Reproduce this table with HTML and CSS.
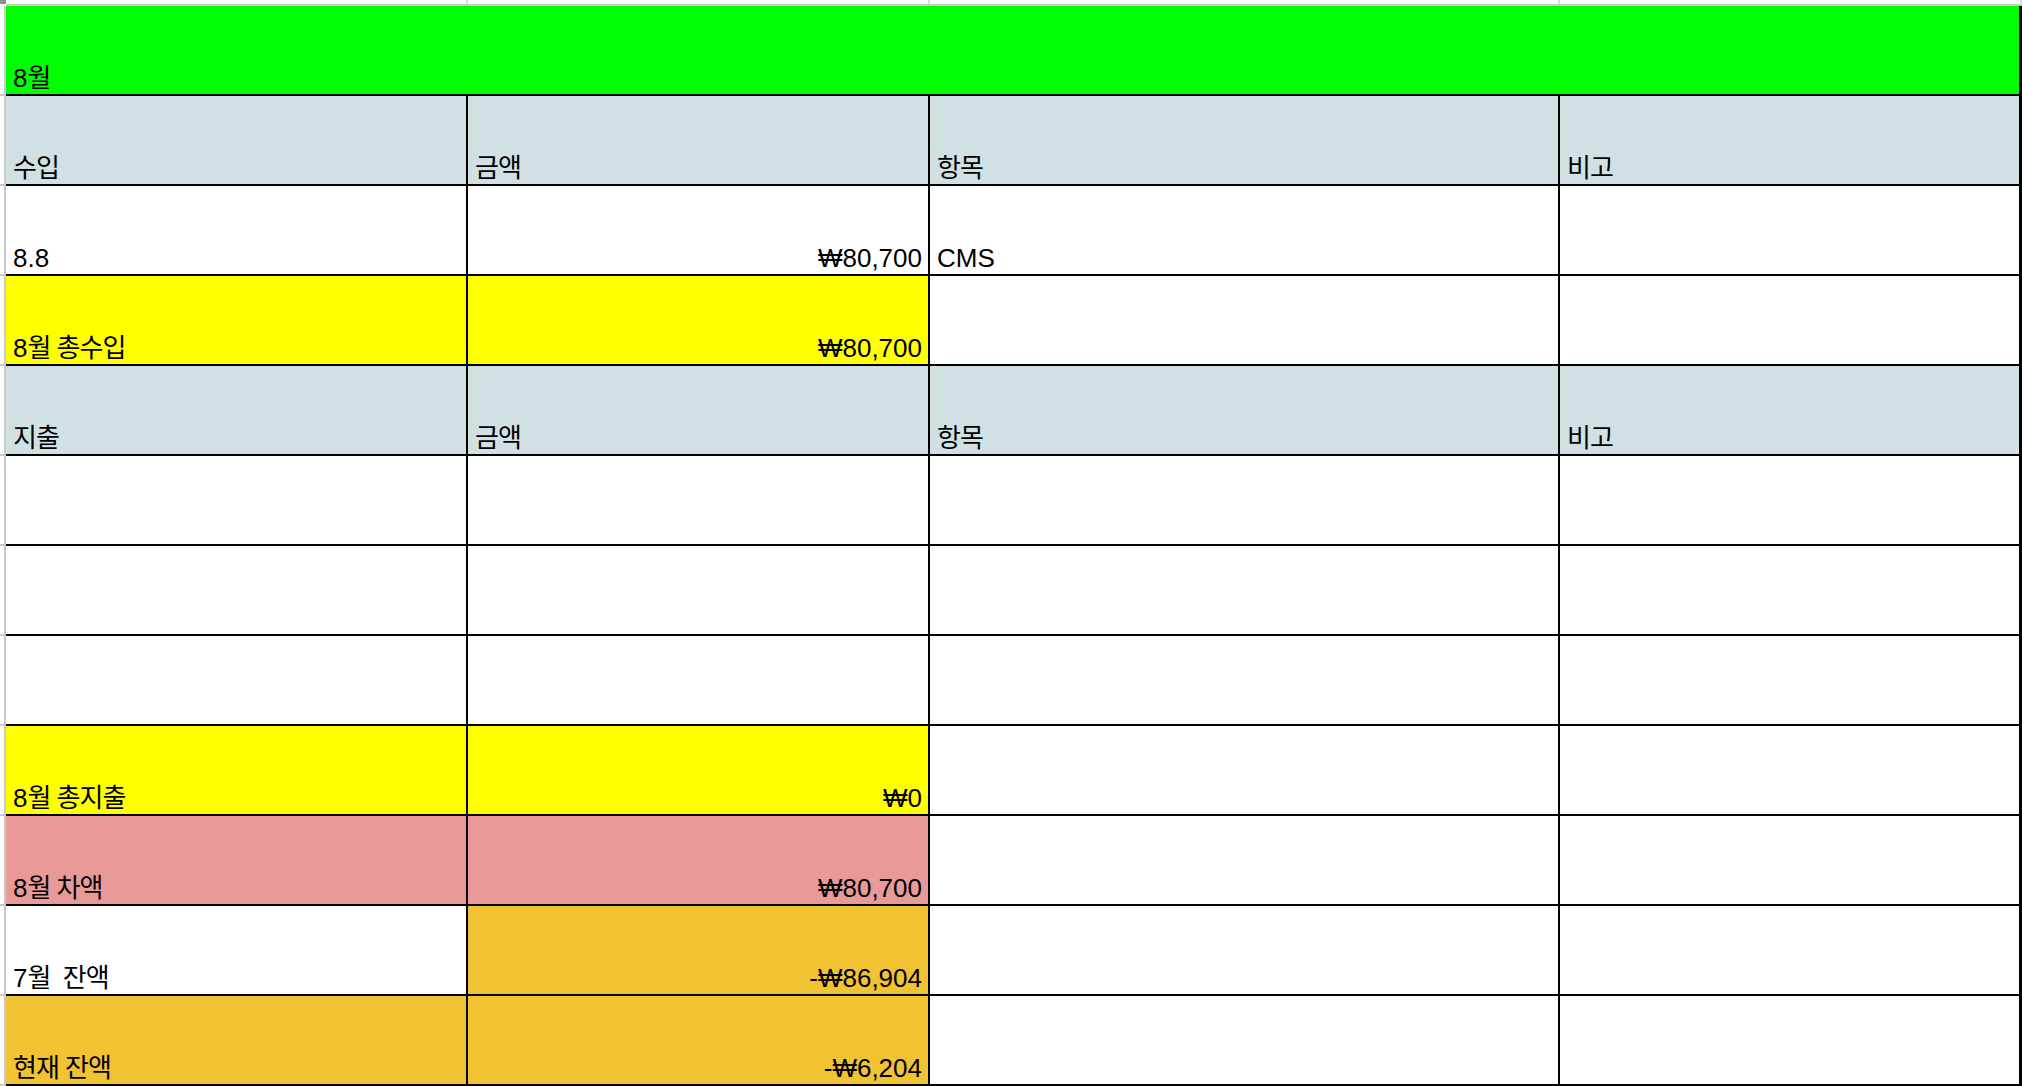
FILE: index.html
```html
<!DOCTYPE html>
<html lang="ko">
<head>
<meta charset="utf-8">
<title>8월 회계</title>
<link rel="stylesheet" href="styles.css">
</head>
<body>
<div class="sheet">
  <div class="corner"></div>
  <div class="colhead">
    <div class="ch"></div><div class="ch"></div><div class="ch"></div><div class="ch"></div>
  </div>
  <div class="rowhead">
    <div class="rh"></div><div class="rh"></div><div class="rh"></div><div class="rh"></div>
    <div class="rh"></div><div class="rh"></div><div class="rh"></div><div class="rh"></div>
    <div class="rh"></div><div class="rh"></div><div class="rh"></div><div class="rh"></div>
  </div>
  <div class="grid">
    <div class="cell title span4">8<span class="ko">월</span></div>

    <div class="cell head"><span class="ko">수입</span></div>
    <div class="cell head"><span class="ko">금액</span></div>
    <div class="cell head"><span class="ko">항목</span></div>
    <div class="cell head last"><span class="ko">비고</span></div>

    <div class="cell">8.8</div>
    <div class="cell num">₩80,700</div>
    <div class="cell">CMS</div>
    <div class="cell last"></div>

    <div class="cell yellow">8<span class="ko">월 총수입</span></div>
    <div class="cell yellow num">₩80,700</div>
    <div class="cell"></div>
    <div class="cell last"></div>

    <div class="cell head"><span class="ko">지출</span></div>
    <div class="cell head"><span class="ko">금액</span></div>
    <div class="cell head"><span class="ko">항목</span></div>
    <div class="cell head last"><span class="ko">비고</span></div>

    <div class="cell"></div><div class="cell"></div><div class="cell"></div><div class="cell last"></div>
    <div class="cell"></div><div class="cell"></div><div class="cell"></div><div class="cell last"></div>
    <div class="cell"></div><div class="cell"></div><div class="cell"></div><div class="cell last"></div>

    <div class="cell yellow">8<span class="ko">월 총지출</span></div>
    <div class="cell yellow num">₩0</div>
    <div class="cell"></div>
    <div class="cell last"></div>

    <div class="cell pink">8<span class="ko">월 차액</span></div>
    <div class="cell pink num">₩80,700</div>
    <div class="cell"></div>
    <div class="cell last"></div>

    <div class="cell">7<span class="ko">월  잔액</span></div>
    <div class="cell orange num">-₩86,904</div>
    <div class="cell"></div>
    <div class="cell last"></div>

    <div class="cell orange"><span class="ko">현재 잔액</span></div>
    <div class="cell orange num">-₩6,204</div>
    <div class="cell"></div>
    <div class="cell last"></div>
  </div>
</div>
</body>
</html>
```

FILE: styles.css
```css
html, body {
  margin: 0;
  padding: 0;
  background: #ffffff;
}

body {
  font-family: "Liberation Sans", "Noto Sans CJK KR", sans-serif;
  color: #000000;
  overflow: hidden;
}

.sheet {
  display: grid;
  grid-template-columns: 6px 2016px;
  grid-template-rows: 6px 1080px;
  width: 2022px;
  height: 1086px;
}

.corner {
  box-sizing: border-box;
  border-top: 4px solid #8e8e8e;
}

.colhead {
  display: grid;
  grid-template-columns: 462px 462px 630px 462px;
  box-sizing: border-box;
  border-bottom: 2px solid #c9c9c9;
}

.ch {
  box-sizing: border-box;
  border-right: 2px solid #d6d6d6;
}

.rowhead {
  display: grid;
  grid-template-rows: repeat(12, 90px);
  box-sizing: border-box;
  border-right: 2px solid #c9c9c9;
}

.rh {
  box-sizing: border-box;
  border-bottom: 2px solid #c9c9c9;
}

.grid {
  display: grid;
  grid-template-columns: 462px 462px 630px 462px;
  grid-template-rows: repeat(12, 90px);
}

.cell {
  box-sizing: border-box;
  display: flex;
  align-items: flex-end;
  padding: 0 7px 3px 7px;
  border-right: 2px solid #000000;
  border-bottom: 2px solid #000000;
  font-size: 26px;
  line-height: 26px;
  white-space: pre;
  background: #ffffff;
}

.cell.last {
  border-right-width: 3px;
}

.span4 {
  grid-column: span 4;
  border-right-width: 3px;
}

.ko {
  font-size: 26px;
  letter-spacing: -1px;
}

.num {
  justify-content: flex-end;
  padding-right: 6px;
}

.title {
  background: #00ff00;
}

.head {
  background: #d0e0e3;
}

.yellow {
  background: #ffff00;
}

.pink {
  background: #ea9999;
}

.orange {
  background: #f1c232;
}
```
